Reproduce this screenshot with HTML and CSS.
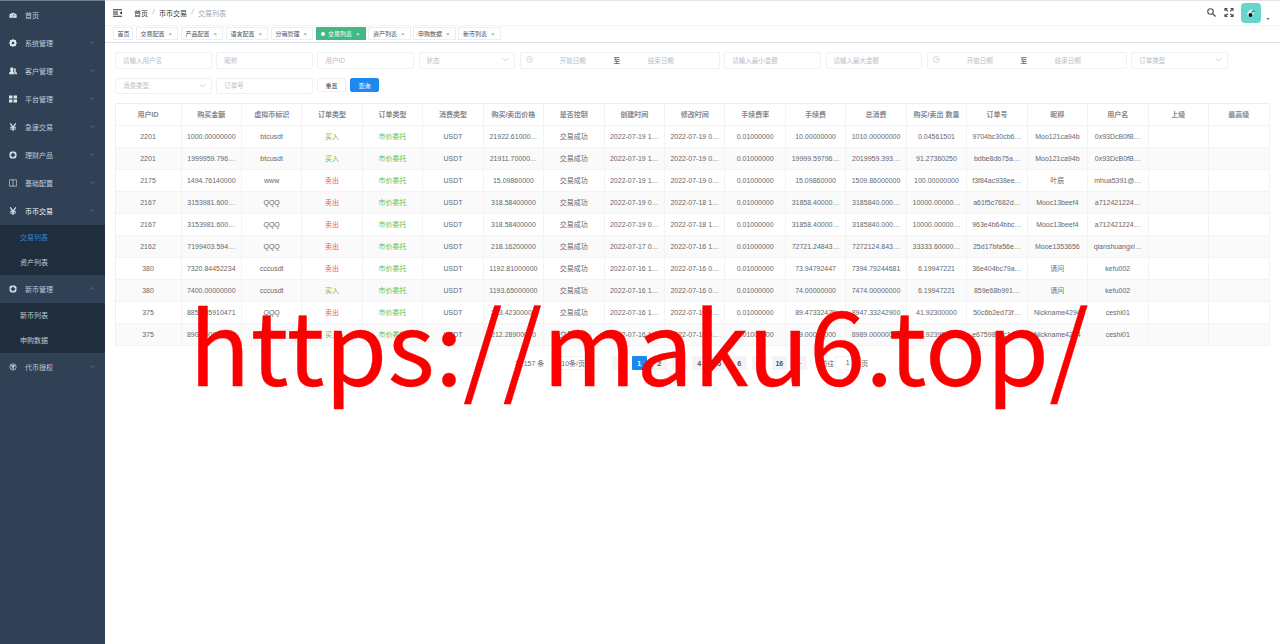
FILE: index.html
```html
<!DOCTYPE html>
<html lang="zh-CN">
<head>
  <meta charset="utf-8">
  <title>交易列表</title>
  <link rel="stylesheet" href="styles.css">
</head>
<body>

<!-- shared icons -->
<svg class="sprite">
  <symbol id="down" viewBox="0 0 10 10"><path d="M1 3l4 4 4-4" fill="none" stroke="currentColor"/></symbol>
  <symbol id="up" viewBox="0 0 10 10"><path d="M1 7l4-4 4 4" fill="none" stroke="currentColor"/></symbol>
  <symbol id="right" viewBox="0 0 10 10"><path d="M3 1l4 4-4 4" fill="none" stroke="currentColor" stroke-width="1.4"/></symbol>
  <symbol id="left" viewBox="0 0 10 10"><path d="M7 1L3 5l4 4" fill="none" stroke="currentColor" stroke-width="1.4"/></symbol>
  <symbol id="clock" viewBox="0 0 12 12"><circle cx="6" cy="6" r="5" fill="none" stroke="currentColor"/><path d="M6 3v3.5h3" fill="none" stroke="currentColor"/></symbol>
  <symbol id="yen" viewBox="0 0 14 14"><path d="M2 .5L7 7l5-6.500M7 7v7M2 7.500h10M2 10.500h10" fill="none" stroke="currentColor" stroke-width="2"/></symbol>
  <symbol id="ring" viewBox="0 0 14 14"><circle cx="7" cy="7" r="5" fill="none" stroke="currentColor" stroke-width="3"/><path d="M7 0v3M7 11v3M0 7h3M11 7h3" stroke="#304156" stroke-width="1"/></symbol>
</svg>

<div class="app">

<aside class="sidebar">
  <div class="menu-item">
    <svg class="icon" viewBox="0 0 14 14"><path d="M1 12A6.500 6.500 0 1 1 13 12z" fill="currentColor"/><path d="M7 10l2-5M3 8h1M10 8h1M5 4l.5.800" stroke="#304156" stroke-width="1.200"/></svg>
    <span>首页</span>
  </div>
  <div class="menu-item">
    <svg class="icon" viewBox="0 0 14 14"><circle cx="7" cy="7" r="4" fill="none" stroke="currentColor" stroke-width="3.400"/><path d="M7 0v2M7 12v2M0 7h2M12 7h2M2 2l1.500 1.500M10.500 10.500L12 12M2 12l1.500-1.500M10.500 3.500L12 2" stroke="currentColor" stroke-width="2"/></svg>
    <span>系统管理</span><svg class="arrow"><use href="#down"/></svg>
  </div>
  <div class="menu-item">
    <svg class="icon" viewBox="0 0 14 14"><path d="M5 1c4 0 3.500 5 1.800 6 0 1.500 3.200 1.500 3.200 5.500H0C0 8.500 3.200 8.500 3.200 7 1.500 6 1 1 5 1zM9 2c4 0 3.500 4 2 5 .2 1.500 3 1.500 3 5.500h-3C11 9.500 9.500 8.500 8.500 7.500 10 6 9.500 4 9 2z" fill="currentColor"/></svg>
    <span>客户管理</span><svg class="arrow"><use href="#down"/></svg>
  </div>
  <div class="menu-item">
    <svg class="icon" viewBox="0 0 14 14"><path d="M0 1h6v5H0zM8 1h6v5H8zM0 8h6v5H0zM8 8h6v5H8z" fill="currentColor"/></svg>
    <span>平台管理</span><svg class="arrow"><use href="#down"/></svg>
  </div>
  <div class="menu-item">
    <svg class="icon"><use href="#yen"/></svg>
    <span>急速交易</span><svg class="arrow"><use href="#down"/></svg>
  </div>
  <div class="menu-item">
    <svg class="icon"><use href="#ring"/></svg>
    <span>理财产品</span><svg class="arrow"><use href="#down"/></svg>
  </div>
  <div class="menu-item">
    <svg class="icon" viewBox="0 0 14 14"><path d="M.7 1.500h12.600v11H.7zM7 1.500v11" fill="none" stroke="currentColor" stroke-width="1.100"/></svg>
    <span>基础配置</span><svg class="arrow"><use href="#down"/></svg>
  </div>
  <div class="menu-item open">
    <svg class="icon"><use href="#yen"/></svg>
    <span>币币交易</span><svg class="arrow"><use href="#up"/></svg>
  </div>
  <div class="submenu">
    <div class="sub-item current">交易列表</div>
    <div class="sub-item">资产列表</div>
  </div>
  <div class="menu-item">
    <svg class="icon"><use href="#ring"/></svg>
    <span>新币管理</span><svg class="arrow"><use href="#up"/></svg>
  </div>
  <div class="submenu">
    <div class="sub-item">新币列表</div>
    <div class="sub-item">申购数据</div>
  </div>
  <div class="menu-item">
    <svg class="icon" viewBox="0 0 14 14"><circle cx="7" cy="7" r="5.500" fill="none" stroke="currentColor" stroke-width="1.200"/><path d="M4 5h6M7 5v6" stroke="currentColor" stroke-width="2.200"/></svg>
    <span>代币授权</span><svg class="arrow"><use href="#down"/></svg>
  </div>
</aside>

<main class="main">

  <header class="navbar">
    <svg class="fold" viewBox="0 0 18 16"><path d="M0 1.500h18M0 6h10M0 10h10M0 14.500h18" stroke="#222" stroke-width="1.900"/><path d="M18 5v6l-5-3z" fill="#222"/></svg>
    <div class="breadcrumb"><span>首页</span><i>/</i><span>币币交易</span><i>/</i><em>交易列表</em></div>
    <div class="tools">
      <svg class="search" viewBox="0 0 18 18"><circle cx="7" cy="7" r="5.500" fill="none" stroke="#4a4d52" stroke-width="2.200"/><path d="M11 11l6 6" stroke="#4a4d52" stroke-width="2.600"/></svg>
      <svg class="full" viewBox="0 0 18 18"><path d="M1 6V1h5M12 1h5v5M17 12v5h-5M6 17H1v-5M1 1l5.500 5.500M17 1l-5.500 5.500M17 17l-5.500-5.500M1 17l5.500-5.500" fill="none" stroke="#4a4d52" stroke-width="2.200"/></svg>
      <svg class="avatar" viewBox="0 0 20 20"><rect width="20" height="20" rx="4" fill="#66d5cd"/><path d="M6 12q1-5 5-6l-1 4 4-1-3 4z" fill="#d5f4ef"/><circle cx="9.500" cy="12" r="1.900" fill="#111"/><path d="M11 9l3-1" stroke="#356" stroke-width=".8"/></svg>
      <svg class="caret" viewBox="0 0 6 4"><path d="M0 0h6L3 4z" fill="#5a5e66"/></svg>
    </div>
  </header>

  <div class="tags">
    <span class="tag home">首页</span>
    <span class="tag">交易配置<b>×</b></span>
    <span class="tag">产品配置<b>×</b></span>
    <span class="tag">语言配置<b>×</b></span>
    <span class="tag">分销管理<b>×</b></span>
    <span class="tag active">交易列表<b>×</b></span>
    <span class="tag">资产列表<b>×</b></span>
    <span class="tag">申购数据<b>×</b></span>
    <span class="tag">新币列表<b>×</b></span>
  </div>

  <form class="filters">
    <div class="field">请输入用户名</div>
    <div class="field">昵称</div>
    <div class="field">用户ID</div>
    <div class="field select">状态<svg><use href="#down"/></svg></div>
    <div class="field range"><svg><use href="#clock"/></svg><span>开始日期</span><strong>至</strong><span>结束日期</span></div>
    <div class="field">请输入最小金额</div>
    <div class="field">请输入最大金额</div>
    <div class="field range"><svg><use href="#clock"/></svg><span>开始日期</span><strong>至</strong><span>结束日期</span></div>
    <div class="field select">订单类型<svg><use href="#down"/></svg></div>
    <div class="field select">消费类型<svg><use href="#down"/></svg></div>
    <div class="field">订单号</div>
    <button type="button" class="btn">重置</button>
    <button type="button" class="btn primary">查询</button>
  </form>

  <table class="orders">
    <thead>
      <tr><th class="first">用户ID</th><th>购买金额</th><th>虚拟币标识</th><th>订单类型</th><th>订单类型</th><th>消费类型</th><th>购买/卖出价格</th><th>是否控制</th><th>创建时间</th><th>修改时间</th><th>手续费率</th><th>手续费</th><th>总消费</th><th>购买/卖出 数量</th><th>订单号</th><th>昵称</th><th>用户名</th><th>上级</th><th>最高级</th></tr>
    </thead>
    <tbody>
      <tr><td>2201</td><td>1000.00000000</td><td>btcusdt</td><td class="buy">买入</td><td class="buy">市价委托</td><td>USDT</td><td>21922.61000…</td><td>交易成功</td><td>2022-07-19 1…</td><td>2022-07-19 0…</td><td>0.01000000</td><td>10.00000000</td><td>1010.00000000</td><td>0.04561501</td><td>9704bc30cb6…</td><td>Moo121ca94b</td><td>0x93DcB0fB…</td><td></td><td></td></tr>
      <tr><td>2201</td><td>1999959.796…</td><td>btcusdt</td><td class="buy">买入</td><td class="buy">市价委托</td><td>USDT</td><td>21911.70000…</td><td>交易成功</td><td>2022-07-19 1…</td><td>2022-07-19 0…</td><td>0.01000000</td><td>19999.59796…</td><td>2019959.393…</td><td>91.27360250</td><td>bdbe8db75a…</td><td>Moo121ca94b</td><td>0x93DcB0fB…</td><td></td><td></td></tr>
      <tr><td>2175</td><td>1494.76140000</td><td>www</td><td class="sell">卖出</td><td class="buy">市价委托</td><td>USDT</td><td>15.09860000</td><td>交易成功</td><td>2022-07-19 1…</td><td>2022-07-19 0…</td><td>0.01000000</td><td>15.09860000</td><td>1509.86000000</td><td>100.00000000</td><td>f3f84ac938ee…</td><td>叶辰</td><td>mhua5391@…</td><td></td><td></td></tr>
      <tr><td>2167</td><td>3153981.600…</td><td>QQQ</td><td class="sell">卖出</td><td class="buy">市价委托</td><td>USDT</td><td>318.58400000</td><td>交易成功</td><td>2022-07-19 0…</td><td>2022-07-18 1…</td><td>0.01000000</td><td>31858.40000…</td><td>3185840.000…</td><td>10000.00000…</td><td>a61f5c7682d…</td><td>Mooc13beef4</td><td>a712421224…</td><td></td><td></td></tr>
      <tr><td>2167</td><td>3153981.600…</td><td>QQQ</td><td class="sell">卖出</td><td class="buy">市价委托</td><td>USDT</td><td>318.58400000</td><td>交易成功</td><td>2022-07-19 0…</td><td>2022-07-18 1…</td><td>0.01000000</td><td>31858.40000…</td><td>3185840.000…</td><td>10000.00000…</td><td>963e4b64bbc…</td><td>Mooc13beef4</td><td>a712421224…</td><td></td><td></td></tr>
      <tr><td>2162</td><td>7199403.594…</td><td>QQQ</td><td class="sell">卖出</td><td class="buy">市价委托</td><td>USDT</td><td>218.16200000</td><td>交易成功</td><td>2022-07-17 0…</td><td>2022-07-16 1…</td><td>0.01000000</td><td>72721.24843…</td><td>7272124.843…</td><td>33333.60000…</td><td>25d17bfa56e…</td><td>Mooe1353656</td><td>qianshuangxi…</td><td></td><td></td></tr>
      <tr><td>380</td><td>7320.84452234</td><td>cccusdt</td><td class="sell">卖出</td><td class="buy">市价委托</td><td>USDT</td><td>1192.81000000</td><td>交易成功</td><td>2022-07-16 1…</td><td>2022-07-16 0…</td><td>0.01000000</td><td>73.94792447</td><td>7394.79244681</td><td>6.19947221</td><td>36e404bc79a…</td><td>请问</td><td>kefu002</td><td></td><td></td></tr>
      <tr><td>380</td><td>7400.00000000</td><td>cccusdt</td><td class="buy">买入</td><td class="buy">市价委托</td><td>USDT</td><td>1193.65000000</td><td>交易成功</td><td>2022-07-16 1…</td><td>2022-07-16 0…</td><td>0.01000000</td><td>74.00000000</td><td>7474.00000000</td><td>6.19947221</td><td>859e68b991…</td><td>请问</td><td>kefu002</td><td></td><td></td></tr>
      <tr><td>375</td><td>8857.85910471</td><td>QQQ</td><td class="sell">卖出</td><td class="buy">市价委托</td><td>USDT</td><td>213.42300000</td><td>交易成功</td><td>2022-07-16 1…</td><td>2022-07-16 0…</td><td>0.01000000</td><td>89.47332429</td><td>8947.33242900</td><td>41.92300000</td><td>50c6b2ed73f…</td><td>Nickname4294</td><td>ceshi01</td><td></td><td></td></tr>
      <tr><td>375</td><td>8900.00000000</td><td>QQQ</td><td class="buy">买入</td><td class="buy">市价委托</td><td>USDT</td><td>212.28900000</td><td>交易成功</td><td>2022-07-16 1…</td><td>2022-07-16 0…</td><td>0.01000000</td><td>89.00000000</td><td>8989.00000000</td><td>41.92398099</td><td>e6759895c1a…</td><td>Nickname4294</td><td>ceshi01</td><td></td><td></td></tr>
    </tbody>
  </table>

  <div class="pagination">
    <span class="total">共 157 条</span>
    <span class="size">10条/页<svg><use href="#down"/></svg></span>
    <span class="page off"><svg><use href="#left"/></svg></span>
    <span class="page on">1</span>
    <span class="page">2</span>
    <span class="page">···</span>
    <span class="page">4</span>
    <span class="page">5</span>
    <span class="page">6</span>
    <span class="page">···</span>
    <span class="page">16</span>
    <span class="page"><svg><use href="#right"/></svg></span>
    <span class="jump">前往</span><span class="jump-input">1</span><span>页</span>
  </div>

</main>
</div>

<div class="watermark">https://maku6.top/</div>

</body>
</html>
```

FILE: styles.css
```css
* {
  box-sizing: border-box;
}

body {
  margin: 0;
  background: #fff;
  color: #66686c;
  font-family: "Liberation Sans", "Noto Sans CJK SC", sans-serif;
  font-size: 7px;
  overflow: hidden;
}

svg {
  display: block;
  flex: none;
}

.sprite {
  display: none;
}

.app {
  display: flex;
  height: 644px;
  border-top: 1px solid #e4e6e8;
}

/* sidebar */
.sidebar {
  width: 105px;
  flex: none;
  background: #304156;
  color: #bfcbd9;
  box-shadow: 0 -1px 0 #6e7f90;
}

.menu-item {
  display: flex;
  align-items: center;
  height: 28px;
  padding: 0 10px 1px 9px;
}

.menu-item .icon {
  width: 8px;
  height: 8px;
  margin-right: 8px;
  color: #e0e5eb;
}

.menu-item.open {
  color: #f4f4f5;
}

.arrow {
  width: 5px;
  height: 5px;
  margin-left: auto;
  color: #8592a3;
}

.submenu {
  background: #1f2d3d;
}

.sub-item {
  height: 25px;
  line-height: 25px;
  padding-left: 20px;
}

.sub-item.current {
  color: #2f86dc;
}

/* top bar */
.main {
  flex: 1;
  min-width: 0;
}

.navbar {
  display: flex;
  align-items: center;
  height: 25px;
  padding: 0 10px 1px 8px;
  border-bottom: 1px solid #f3f4f6;
}

.fold {
  width: 9px;
  height: 8px;
  margin-right: 12px;
}

.breadcrumb {
  display: flex;
  color: #303133;
}

.breadcrumb i {
  width: 11px;
  text-align: center;
  color: #a0a6b0;
}

.breadcrumb em {
  font-style: normal;
  color: #97a8be;
}

.tools {
  display: flex;
  align-items: center;
  margin-left: auto;
}

.search {
  width: 9px;
  height: 9px;
  margin-right: 8px;
}

.full {
  width: 10px;
  height: 9px;
  margin-right: 7px;
}

.avatar {
  width: 20px;
  height: 20px;
  margin-right: 5px;
}

.caret {
  width: 4px;
  height: 2px;
  margin-top: 12px;
}

/* opened pages */
.tags {
  display: flex;
  gap: 2.5px;
  height: 17px;
  padding: 1px 0 0 7.5px;
  border-bottom: 1px solid #dcdfe3;
}

.tag {
  display: flex;
  align-items: center;
  width: 42.5px;
  height: 13px;
  padding-left: 4px;
  border: 1px solid #eceef2;
  font-size: 6px;
  color: #495060;
  white-space: nowrap;
}

.tag.home {
  width: 20.5px;
}

.tag b {
  margin-left: 4px;
  font-weight: 400;
  color: #909399;
}

.tag.active {
  width: 49.5px;
  margin-left: .5px;
  background: #42b983;
  border-color: #42b983;
  color: #fff;
}

.tag.active::before {
  content: "";
  width: 4px;
  height: 4px;
  margin-right: 3px;
  border-radius: 50%;
  background: #fff;
}

.tag.active b {
  color: #fff;
}

/* search form */
.filters {
  display: flex;
  flex-wrap: wrap;
  gap: 9px 4.4px;
  padding: 9px 10px 0;
}

.field {
  display: flex;
  align-items: center;
  width: 96.8px;
  height: 16.5px;
  padding: 0 7px 1px;
  border: 1px solid #eff1f5;
  border-radius: 2px;
  color: #b9bdc6;
  font-size: 6.5px;
}

.select {
  justify-content: space-between;
  padding-right: 5px;
}

.select svg {
  width: 7px;
  height: 7px;
}

.range {
  width: 200.2px;
  padding: 0 5px 1px;
}

.range svg {
  width: 7px;
  height: 7px;
}

.range span {
  width: 80px;
  text-align: center;
}

.range strong {
  width: 8px;
  font-size: 7px;
  font-weight: 400;
  text-align: center;
  color: #303133;
}

.btn {
  width: 28.5px;
  height: 14px;
  margin-top: .5px;
  padding: 0;
  border: 1px solid #eff1f5;
  border-radius: 2px;
  background: #fff;
  color: #404246;
  font-family: inherit;
  font-size: 6px;
}

.btn.primary {
  background: #1b89ee;
  border-color: #1b89ee;
  color: #fff;
}

/* order table */
.orders {
  width: 1155px;
  margin: 9px 0 0 9.5px;
  table-layout: fixed;
  border-collapse: separate;
  border-spacing: 0;
  border-top: 1px solid #ebeef5;
  border-left: 1px solid #ebeef5;
}

.orders th,
.orders td {
  height: 22px;
  padding: 0;
  border-right: 1px solid #f1f3f7;
  border-bottom: 1px solid #f1f3f7;
  line-height: 10px;
  text-align: center;
  white-space: nowrap;
}

.orders .first {
  width: 66px;
}

.orders th {
  color: #85888f;
  font-weight: 700;
}

.orders tbody tr:nth-child(even) {
  background: #fafafa;
}

.orders .buy {
  color: #67c23a;
}

.orders .sell {
  color: #f05c5c;
}

/* pagination */
.pagination {
  display: flex;
  align-items: center;
  justify-content: center;
  height: 14px;
  margin-top: 10px;
  padding-right: 2px;
}

.total {
  margin-right: 11px;
}

.size {
  display: flex;
  align-items: center;
  justify-content: space-between;
  width: 44px;
  height: 14px;
  padding: 0 5px;
  margin-right: 10px;
  border: 1px solid #f0f2f5;
  border-radius: 2px;
}

.size svg {
  width: 5px;
  height: 5px;
  color: #c0c4cc;
}

.page {
  display: flex;
  align-items: center;
  justify-content: center;
  width: 15px;
  height: 14px;
  margin: 0 2.5px;
  border-radius: 1px;
  background: #f4f4f5;
  color: #505256;
  font-weight: 700;
}

.page svg {
  width: 5px;
  height: 5px;
}

.page.off {
  color: #c0c4cc;
}

.page.on {
  background: #1b89ee;
  color: #fff;
}

.jump {
  margin-left: 11px;
}

.jump-input {
  width: 25px;
  height: 14px;
  margin: 0 1px;
  border: 1px solid #f0f2f5;
  border-radius: 2px;
  line-height: 12px;
  text-align: center;
}

/* site address laid over the page */
.watermark {
  position: absolute;
  left: 189px;
  top: 269px;
  font-family: "Noto Sans CJK SC", sans-serif;
  font-size: 101px;
  line-height: 146px;
  letter-spacing: .15px;
  -webkit-text-stroke: .3px #fb0000;
  color: #fb0000;
  white-space: nowrap;
}
```
